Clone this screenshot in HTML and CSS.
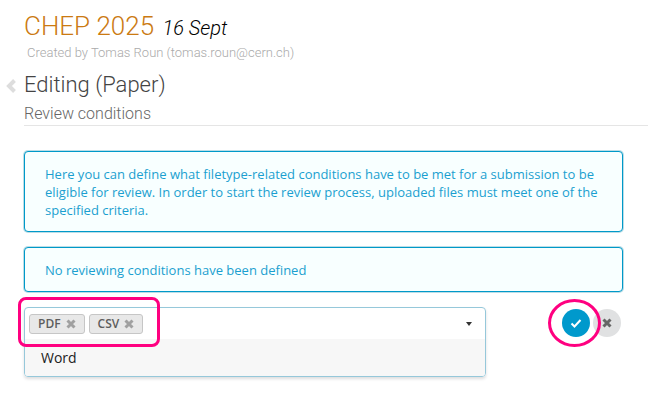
FILE: index.html
```html
<!DOCTYPE html>
<html lang="en">
<head>
<meta charset="utf-8">
<title>Review conditions</title>
<link rel="stylesheet" href="styles.css">
</head>
<body>
<main class="page">
  <header class="event">
    <h1 class="event-title"><a href="#">CHEP 2025</a> <em class="event-date">16 Sept</em></h1>
    <p class="event-author">Created by Tomas Roun (tomas.roun@cern.ch)</p>
  </header>
  <div class="heading">
    <a class="back" href="#" aria-label="Back"><svg viewBox="0 0 10 14"><path d="M8.5 1.5 3 7l5.500 5.500"/></svg></a>
    <h2 class="section-title">Editing (Paper)</h2>
  </div>
  <h3 class="subtitle">Review conditions</h3>
  <div class="content">
    <p class="message">Here you can define what filetype-related conditions have to be met for a submission to be eligible for review. In order to start the review process, uploaded files must meet one of the specified criteria.</p>
    <p class="message">No reviewing conditions have been defined</p>
    <form class="condition">
      <div class="dropdown">
        <div class="field">
          <span class="chip">PDF<button type="button" aria-label="Remove PDF"><svg viewBox="0 0 10 10"><path d="m1.5 1.5 7 7m0-7-7 7"/></svg></button></span>
          <span class="chip">CSV<button type="button" aria-label="Remove CSV"><svg viewBox="0 0 10 10"><path d="m1.5 1.5 7 7m0-7-7 7"/></svg></button></span>
          <input class="search" type="text" aria-label="File types">
          <button class="toggle" type="button" aria-label="Show file types"><svg viewBox="0 0 8 4"><path d="M1 0h6L4 4z"/></svg></button>
          <span class="mark mark-box"></span>
        </div>
        <ul class="options" role="listbox" aria-label="File types">
          <li role="option" aria-selected="false">Word</li>
        </ul>
      </div>
      <div class="actions">
        <button class="round confirm" type="submit" aria-label="Save"><svg viewBox="0 0 12 12"><path d="m1.500 6.500 3 3 6-6.500"/></svg></button>
        <button class="round cancel" type="button" aria-label="Cancel"><svg viewBox="0 0 10 10"><path d="m1.5 1.5 7 7m0-7-7 7"/></svg></button>
        <span class="mark mark-circle"></span>
      </div>
    </form>
  </div>
</main>
</body>
</html>
```
FILE: styles.css
```css
* { box-sizing: border-box; }
body {
  margin: 0;
  background: #fff;
  color: #222;
  font-family: "Open Sans", "Noto Sans", sans-serif;
  font-size: 13px;
}
h1, h2, h3, p, ul { margin: 0; padding: 0; font-weight: 300; }
button { border: 0; padding: 0; background: none; cursor: pointer; }
svg { display: block; fill: none; stroke: currentColor; }
.page { padding: 11px 7px 30px 24px; }
.event, .heading, .subtitle { font-family: Roboto, sans-serif; }
.event-title { font-size: 26px; line-height: 30px; }
.event-title a { margin-right: 2px; color: #cb7a12; text-decoration: none; }
.event-date { font-size: 20px; color: #000; }
.event-author {
  padding-left: 3px;
  color: #aaa;
  font-size: 13px;
  line-height: 20px;
}
.heading { position: relative; margin-top: 8px; }
.back { position: absolute; left: -18px; top: 8px; color: #ddd; }
.back svg { width: 10px; height: 14px; stroke-width: 4; }
.section-title { color: #444; font-size: 22px; line-height: 28px; }
.subtitle {
  padding-top: 4px;
  border-bottom: 1px solid #e5e5e5;
  color: #666;
  font-size: 16px;
  line-height: 22px;
}
.content { padding: 25px 25px 0 0; }
.message {
  margin-bottom: 15px;
  padding: 13px 20px 12px;
  border: 1px solid #0099c9;
  border-radius: 4px;
  box-shadow: 0 0 0 1px #bcdde6;
  background: #f8ffff;
  color: #1b9fd0;
  font-weight: 400;
  line-height: 18px;
}
.condition { display: flex; justify-content: space-between; align-items: flex-start; }
.dropdown {
  flex: 0 1 462px;
  border: 1px solid #96c8da;
  border-radius: 4px;
  box-shadow: 0 2px 3px #22242626;
}
.field { position: relative; display: flex; align-items: center; gap: 4px; height: 31px; padding: 0 4px; }
.chip {
  display: flex;
  align-items: center;
  gap: 5px;
  height: 20px;
  padding: 0 8px;
  border: 1px solid #c6c6c6;
  border-radius: 3px;
  background: #e8e8e8;
  color: #5d5d5d;
  font-size: 12px;
  font-weight: 600;
}
.chip button { color: #a0a0a0; }
.chip svg { width: 10px; height: 10px; stroke-width: 3; }
.search { flex: 1; min-width: 0; border: 0; outline: 0; background: none; font: inherit; }
.toggle { padding: 8px; color: #333; }
.toggle svg { width: 8px; height: 4px; fill: currentColor; stroke: none; }
.options { list-style: none; border-radius: 0 0 3px 3px; background: #f7f7f7; }
.options li { padding: 0 16px; font-size: 14px; line-height: 37px; font-weight: 400; }
.actions { position: relative; display: flex; gap: 3px; padding: 2px 2px 0 0; }
.round { display: grid; place-items: center; width: 28px; height: 28px; border-radius: 50%; }
.confirm { background: #0099cc; color: #fff; }
.confirm svg { width: 12px; height: 12px; stroke-width: 2; }
.cancel { background: #e0e1e2; color: #666; }
.cancel svg { width: 10px; height: 10px; stroke-width: 3; }
.mark { position: absolute; border: 3px solid #ff0080; pointer-events: none; }
.mark-box { left: -7px; top: -11px; width: 142px; height: 50px; border-radius: 8px; }
.mark-circle { left: -14px; top: -8px; width: 53px; height: 48px; border-radius: 50%; }
```
